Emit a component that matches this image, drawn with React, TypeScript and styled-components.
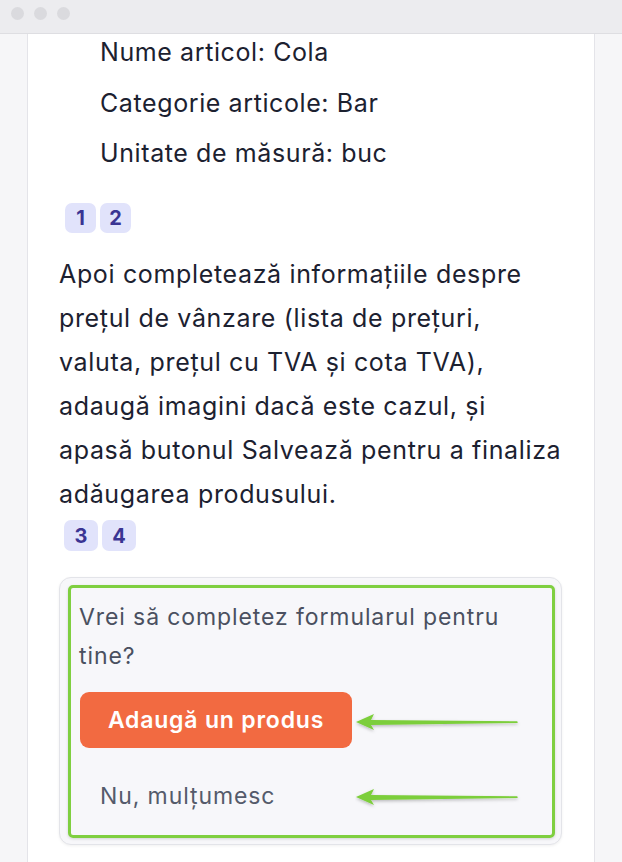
import React from "react";
import styled, { createGlobalStyle } from "styled-components";

const GlobalStyle = createGlobalStyle`
  html, body {
    margin: 0;
    padding: 0;
    background: #f6f6f8;
  }
  body {
    font-family: Inter, "Noto Sans", "Liberation Sans", sans-serif;
    -webkit-font-smoothing: antialiased;
  }
  * { box-sizing: border-box; }
`;

const details = [
  "Nume articol: Cola",
  "Categorie articole: Bar",
  "Unitate de măsură: buc",
];

function Arrow() {
  return (
    <svg width="166" height="22" viewBox="0 0 166 22">
      <defs>
        <filter id="arrowShadow" x="-10%" y="-60%" width="120%" height="220%">
          <feDropShadow dx="0" dy="1.5" stdDeviation="1.5" floodColor="#000" floodOpacity="0.25" />
        </filter>
      </defs>
      <polygon
        points="1,10 19,2 16,8 162,9.3 163,10.2 162,11 16,13 19,18"
        fill="#7cce3a"
        filter="url(#arrowShadow)"
      />
    </svg>
  );
}

export default function App() {
  return (
    <>
      <GlobalStyle />
      <Window>
        <TitleBar>
          <Dot />
          <Dot />
          <Dot />
        </TitleBar>
        <Body>
          <Card>
            <DetailList>
              {details.map((d) => (
                <DetailItem key={d}>{d}</DetailItem>
              ))}
            </DetailList>

            <BadgeRow $top={32}>
              <Badge>1</Badge>
              <Badge>2</Badge>
            </BadgeRow>

            <Paragraph>
              Apoi completează informațiile despre prețul de vânzare (lista de
              prețuri, valuta, prețul cu TVA și cota TVA), adaugă imagini dacă
              este cazul, și apasă butonul Salvează pentru a finaliza adăugarea
              produsului.
            </Paragraph>

            <BadgeRow $top={4} $left={5}>
              <Badge $wide>3</Badge>
              <Badge $wide>4</Badge>
            </BadgeRow>

            <Callout>
              <Highlight>
                <Question>Vrei să completez formularul pentru tine?</Question>
                <PrimaryButton>Adaugă un produs</PrimaryButton>
                <SecondaryButton>Nu, mulțumesc</SecondaryButton>
                <ArrowSpot $top={124}>
                  <Arrow />
                </ArrowSpot>
                <ArrowSpot $top={199}>
                  <Arrow />
                </ArrowSpot>
              </Highlight>
            </Callout>
          </Card>
        </Body>
      </Window>
    </>
  );
}

const Window = styled.div`
  width: 622px;
  height: 862px;
  display: flex;
  flex-direction: column;
  overflow: hidden;
  background: #f6f6f8;
`;

const TitleBar = styled.div`
  height: 34px;
  flex-shrink: 0;
  display: flex;
  align-items: center;
  gap: 10px;
  padding: 0 0 6px 11px;
  background: #ececef;
  border-bottom: 1px solid #dedee2;
`;

const Dot = styled.span`
  width: 13px;
  height: 13px;
  border-radius: 50%;
  background: #dadade;
`;

const Body = styled.div`
  flex: 1;
  display: flex;
  padding: 0 27px;
  min-height: 0;
`;

const Card = styled.div`
  flex: 1;
  background: #ffffff;
  border-left: 1px solid #e4e4e9;
  border-right: 1px solid #e4e4e9;
  padding: 0 31px;
  overflow: hidden;
`;

const DetailList = styled.ul`
  list-style: none;
  margin: 0;
  padding: 0 0 0 41px;
  display: flex;
  flex-direction: column;
  gap: 14.5px;
`;

const DetailItem = styled.li`
  font-size: 25px;
  letter-spacing: 0.6px;
  line-height: 36px;
  color: #1c2130;
`;

const BadgeRow = styled.div<{ $top: number; $left?: number }>`
  display: flex;
  gap: 4px;
  margin-top: ${(p) => p.$top}px;
  padding-left: ${(p) => p.$left ?? 6}px;
`;

const Badge = styled.span<{ $wide?: boolean }>`
  width: ${(p) => (p.$wide ? 34 : 31)}px;
  height: ${(p) => (p.$wide ? 31 : 30)}px;
  display: flex;
  align-items: center;
  justify-content: center;
  border-radius: 7px;
  background: #e1e3fb;
  color: #3a3493;
  font-size: 20px;
  font-weight: 700;
`;

const Paragraph = styled.p`
  margin: 19px 0 0;
  font-size: 25px;
  letter-spacing: 0.65px;
  line-height: 44px;
  color: #1c2130;
`;

const Callout = styled.div`
  margin-top: 26px;
  width: 503px;
  padding: 7px 6px 6px 8px;
  background: #f7f7fa;
  border: 1px solid #e3e4e9;
  border-radius: 12px;
  box-shadow: 0 1px 3px rgba(0, 0, 0, 0.06);
`;

const Highlight = styled.div`
  position: relative;
  display: flex;
  flex-direction: column;
  align-items: flex-start;
  padding: 10px 8px 11px;
  border: 3px solid #7fcf40;
  border-radius: 5px;
  box-shadow: 0 1px 3px rgba(0, 0, 0, 0.15);
`;

const Question = styled.p`
  margin: 0;
  font-size: 23px;
  letter-spacing: 0.9px;
  line-height: 39px;
  color: #4a5060;
`;

const PrimaryButton = styled.button`
  margin-top: 16px;
  margin-left: 1px;
  width: 272px;
  height: 56px;
  border: none;
  border-radius: 9px;
  background: #f26a41;
  color: #ffffff;
  font-family: inherit;
  font-size: 23px;
  letter-spacing: 0.8px;
  font-weight: 600;
  cursor: pointer;
`;

const SecondaryButton = styled.button`
  margin-top: 20px;
  height: 56px;
  padding: 0 21px;
  border: none;
  background: transparent;
  color: #555b6b;
  font-family: inherit;
  font-size: 23px;
  letter-spacing: 0.9px;
  cursor: pointer;
`;

const ArrowSpot = styled.div<{ $top: number }>`
  position: absolute;
  left: 284px;
  top: ${(p) => p.$top}px;
  line-height: 0;
`;
